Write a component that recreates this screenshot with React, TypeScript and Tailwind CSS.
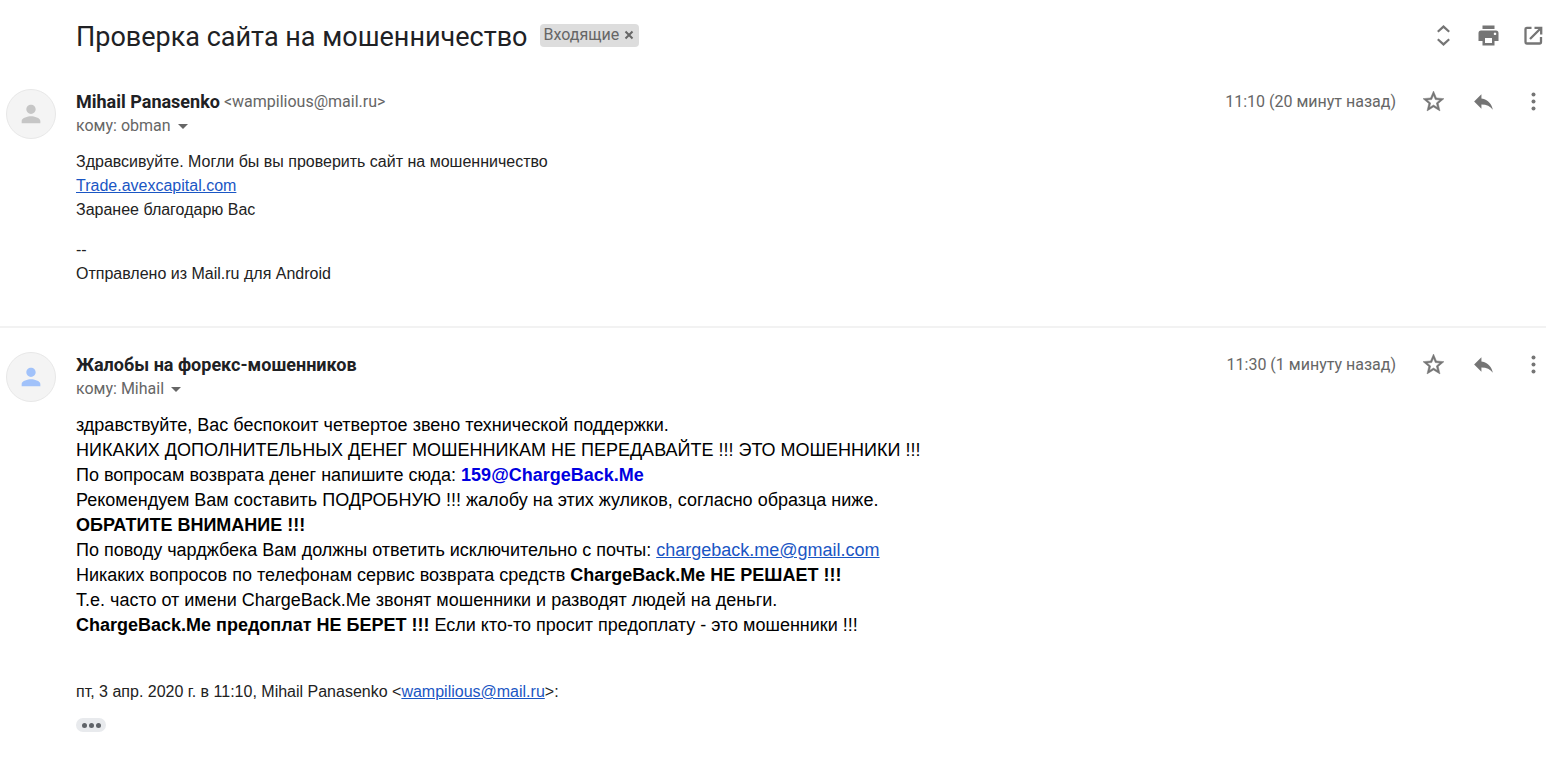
import React from "react";
import { MdArrowDropDown, MdPerson, MdReply } from "react-icons/md";

function UnfoldIcon() {
  return (
    <svg width="25" height="25" viewBox="0 0 25 25" fill="none" stroke="currentColor" strokeWidth="2.2" aria-hidden="true">
      <path d="M6.8 8.8 12.5 3.6 18.2 8.8M6.8 16.2 12.5 21.4 18.2 16.2" />
    </svg>
  );
}

function PrintIcon() {
  return (
    <svg width="25" height="25" viewBox="0 0 25 25" fill="currentColor" aria-hidden="true">
      <path d="M6.5 2.5h12v3.5h-12zM5 7.5h15a2.5 2.5 0 0 1 2.5 2.5v8h-4v4.5h-12v-4.5h-4v-8a2.5 2.5 0 0 1 2.5-2.5zM9 15v5h7v-5zM19 9.5a1.3 1.3 0 1 0 .01 0z" fillRule="evenodd" />
    </svg>
  );
}

function OpenInNewIcon() {
  return (
    <svg width="25" height="25" viewBox="0 0 25 25" fill="none" stroke="currentColor" strokeWidth="2.3" aria-hidden="true">
      <path d="M10.5 4.8H6a1.5 1.5 0 0 0-1.5 1.5V19a1.5 1.5 0 0 0 1.5 1.5h12.5a1.5 1.5 0 0 0 1.5-1.5v-5" />
      <path d="M13.5 4.8H20.2V11.5M20 5 9 16" />
    </svg>
  );
}

function StarIcon() {
  return (
    <svg width="25" height="25" viewBox="0 0 24 24" fill="currentColor" stroke="currentColor" strokeWidth="0.5" aria-hidden="true">
      <path d="m22 9.240-7.190-.62L12 2 9.190 8.630 2 9.240l5.460 4.730L5.820 21 12 17.270 18.180 21l-1.630-7.030L22 9.240zM12 15.400l-3.760 2.270 1-4.280-3.320-2.880 4.380-.38L12 6.100l1.710 4.040 4.380.38-3.320 2.880 1 4.280L12 15.400z" />
    </svg>
  );
}

function MoreIcon() {
  return (
    <svg width="25" height="25" viewBox="0 0 25 25" fill="currentColor" aria-hidden="true">
      <circle cx="12.5" cy="5.5" r="2" />
      <circle cx="12.5" cy="12.5" r="2" />
      <circle cx="12.5" cy="19.5" r="2" />
    </svg>
  );
}

type IconButtonProps = { label: string; children: React.ReactNode };

function IconButton({ label, children }: IconButtonProps) {
  return (
    <button type="button" aria-label={label} className="flex size-[25px] items-center justify-center text-[#757575]">
      {children}
    </button>
  );
}

type MessageProps = {
  name: string;
  email?: string;
  to: string;
  time: string;
  avatarColor: string;
  children: React.ReactNode;
};

function Message({ name, email, to, time, avatarColor, children }: MessageProps) {
  return (
    <article className="flex gap-5 pl-1.5">
      <div className={`flex size-[50px] shrink-0 items-center justify-center rounded-full border border-[#e8e8e8] bg-[#f4f4f4] ${avatarColor}`}>
        <MdPerson size={28} />
      </div>
      <div className="min-w-0 flex-1">
        <header className="flex items-start justify-between pr-[18px]">
          <div>
            <div className="flex h-[25px] items-center gap-1">
              <h2 className="text-lg font-bold text-[#202124]">{name}</h2>
              {email && <span className="text-base text-[#666]">{email}</span>}
            </div>
            <button type="button" className="flex h-6 items-center text-base text-[#666]">
              {to}
              <MdArrowDropDown size={24} />
            </button>
          </div>
          <div className="flex h-[25px] items-center gap-[25px]">
            <time className="text-base text-[#666]">{time}</time>
            <IconButton label="Пометить"><StarIcon /></IconButton>
            <IconButton label="Ответить"><MdReply size={25} /></IconButton>
            <IconButton label="Ещё"><MoreIcon /></IconButton>
          </div>
        </header>
        {children}
      </div>
    </article>
  );
}

const linkClass = "text-[#1a56c4] underline";

export default function App() {
  return (
    <main className="min-h-screen bg-white pb-6 font-[Roboto,'Noto_Sans',sans-serif]">
      <header className="flex items-center justify-between pt-[13px] pr-[18px] pl-[76px]">
        <div className="flex items-center gap-3">
          <h1 className="pt-1 text-[27px] leading-10 text-[#202124]">Проверка сайта на мошенничество</h1>
          <span className="flex h-[23px] items-center gap-1 rounded bg-[#ddd] px-1 text-base text-[#666]">
            Входящие
            <button type="button" aria-label="Удалить ярлык" className="flex size-3 items-center justify-center">
              <svg width="10" height="10" viewBox="0 0 10 10" stroke="currentColor" strokeWidth="2" aria-hidden="true">
                <path d="M1.5 1.5 8.5 8.5M8.5 1.5 1.5 8.5" />
              </svg>
            </button>
          </span>
        </div>
        <div className="flex gap-5">
          <IconButton label="Развернуть все"><UnfoldIcon /></IconButton>
          <IconButton label="Печать"><PrintIcon /></IconButton>
          <IconButton label="Открыть в новом окне"><OpenInNewIcon /></IconButton>
        </div>
      </header>

      <div className="pt-8">
        <Message name="Mihail Panasenko" email="<wampilious@mail.ru>" to="кому: obman" time="11:10 (20 минут назад)" avatarColor="text-[#c6c6c6]">
          <div className="pt-3 font-['Liberation_Sans',Arial,sans-serif] text-base text-[#222]">
            <p>Здравсивуйте. Могли бы вы проверить сайт на мошенничество</p>
            <p><a href="#trade" className={linkClass}>Trade.avexcapital.com</a></p>
            <p>Заранее благодарю Вас</p>
            <p className="pt-4">--</p>
            <p>Отправлено из Mail.ru для Android</p>
          </div>
        </Message>
      </div>

      <hr className="mt-10 mr-[18px] border-t-2 border-[#f2f2f2]" />

      <div className="pt-6">
        <Message name="Жалобы на форекс-мошенников" to="кому: Mihail" time="11:30 (1 минуту назад)" avatarColor="text-[#a1c2fa]">
          <div className="pt-3 font-['Liberation_Sans',Arial,sans-serif] text-lg leading-[25px] text-black">
            <p>здравствуйте, Вас беспокоит четвертое звено технической поддержки.</p>
            <p>НИКАКИХ ДОПОЛНИТЕЛЬНЫХ ДЕНЕГ МОШЕННИКАМ НЕ ПЕРЕДАВАЙТЕ !!! ЭТО МОШЕННИКИ !!!</p>
            <p>По вопросам возврата денег напишите сюда: <b className="text-[#0000e0]">159@ChargeBack.Me</b></p>
            <p>Рекомендуем Вам составить ПОДРОБНУЮ !!! жалобу на этих жуликов, согласно образца ниже.</p>
            <p><b>ОБРАТИТЕ ВНИМАНИЕ !!!</b></p>
            <p>По поводу чарджбека Вам должны ответить исключительно с почты: <a href="mailto:chargeback.me@gmail.com" className={linkClass}>chargeback.me@gmail.com</a></p>
            <p>Никаких вопросов по телефонам сервис возврата средств <b>ChargeBack.Me НЕ РЕШАЕТ !!!</b></p>
            <p>Т.е. часто от имени ChargeBack.Me звонят мошенники и разводят людей на деньги.</p>
            <p><b>ChargeBack.Me предоплат НЕ БЕРЕТ !!!</b> Если кто-то просит предоплату - это мошенники !!!</p>
          </div>
          <p className="pt-[42px] font-['Liberation_Sans',Arial,sans-serif] text-base text-[#222]">
            пт, 3 апр. 2020 г. в 11:10, Mihail Panasenko &lt;<a href="mailto:wampilious@mail.ru" className={linkClass}>wampilious@mail.ru</a>&gt;:
          </p>
          <button type="button" aria-label="Показать скрытый текст" className="mt-3.5 flex h-3.5 w-[30px] items-center justify-center gap-0.5 rounded-full bg-[#e8eaed]">
            <span className="size-[5px] rounded-full bg-[#5f6368]" />
            <span className="size-[5px] rounded-full bg-[#5f6368]" />
            <span className="size-[5px] rounded-full bg-[#5f6368]" />
          </button>
        </Message>
      </div>
    </main>
  );
}
